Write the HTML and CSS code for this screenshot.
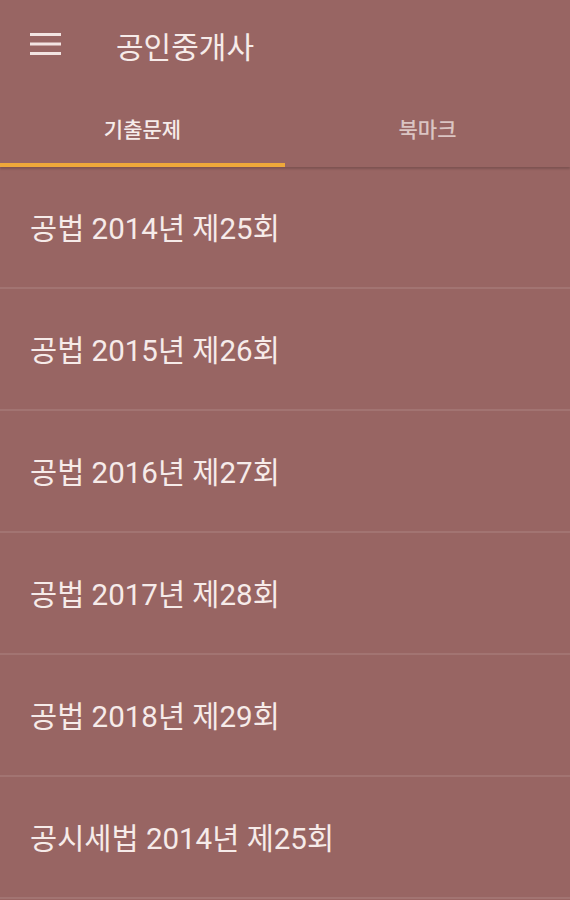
FILE: index.html
```html
<!DOCTYPE html>
<html>
<head>
    <title>공인중개사</title>
    <meta http-equiv="Content-Type" content="text/html;charset=utf-8"/>
    <link rel="stylesheet" href="styles.css">
</head>
<body>
<div class="toolbar">
    <span class="menu">
        <svg width="31" height="22" viewBox="0 0 31 22">
            <rect x="0" y="0" width="31" height="3" fill="#f3e4e2"/>
            <rect x="0" y="9.5" width="31" height="3" fill="#f3e4e2"/>
            <rect x="0" y="19" width="31" height="3" fill="#f3e4e2"/>
        </svg>
    </span>
    <span class="title">공인중개사</span>
</div>
<div class="tabs">
    <div class="tab on">기출문제</div>
    <div class="tab">북마크</div>
</div>
<ul class="list">
    <li>공법 2014년 제25회</li>
    <li>공법 2015년 제26회</li>
    <li>공법 2016년 제27회</li>
    <li>공법 2017년 제28회</li>
    <li>공법 2018년 제29회</li>
    <li>공시세법 2014년 제25회</li>
</ul>
</body>
</html>
```

FILE: styles.css
```css
*{box-sizing: border-box}
body {
    margin:0px;
    padding:0px;
    width:570px;
    height:900px;
    overflow: hidden;
    background:#986563;
    color:#f6ebe9;
    font-family: "Noto Sans CJK KR", "Noto Sans", sans-serif;
}
.toolbar{
    height:88px;
    display:flex;
    align-items:center;
    padding:2px 0 0 30px;
}
.menu{
    display:flex;
    width:31px;
    height:22px;
    margin-top:-2px;
}
.title{
    margin-left:55px;
    font-size:30px;
    line-height:34px;
}
.tabs{
    display:flex;
    height:79px;
    box-shadow:0 2px 2px rgba(0,0,0,0.18);
    position: relative;
}
.tab{
    flex:1;
    display:flex;
    align-items:center;
    justify-content:center;
    padding-top:4px;
    font-size:21px;
    font-weight:500;
    color:rgba(246,235,233,0.72);
    border-bottom:4px solid transparent;
}
.tab.on{
    color:#f6ebe9;
    border-bottom-color:#eea83a;
}
.list{
    list-style:none;
    margin:0;
    padding:0;
}
.list li{
    height:122px;
    display:flex;
    align-items:center;
    padding:0 0 3px 30px;
    font-family: Roboto, "Noto Sans CJK KR", sans-serif;
    font-size:29.5px;
    border-bottom:2px solid rgba(255,255,255,0.1);
}
```
